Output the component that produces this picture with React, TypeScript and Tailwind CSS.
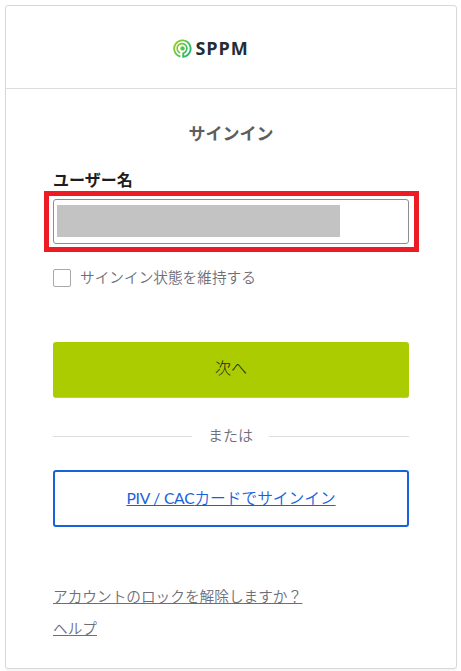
export default function App() {
  return (
    <div className="h-[671px] w-[461px] overflow-hidden bg-white pt-[5px] pl-[5px] font-['Lato','Noto_Sans_CJK_JP',sans-serif] text-[#6e6e78]">
      <main className="h-[664px] w-[452px] rounded-[3px] border border-[#d8d8d8] shadow-[0_2px_1px_rgba(0,0,0,0.04)]">
        <header className="flex h-[83px] items-center justify-center border-b border-[#dddddd]">
          <AppLogo />
        </header>
        <SignInForm />
      </main>
    </div>
  );
}

function AppLogo() {
  return (
    <div className="flex items-center gap-[3px] pt-px pr-[40px]">
      <svg width="19" height="19" viewBox="0 0 19 19" fill="none" className="mt-px">
        <defs>
          <linearGradient id="logo" x1="2" y1="5" x2="17" y2="14" gradientUnits="userSpaceOnUse">
            <stop stopColor="#96cc29" />
            <stop offset="1" stopColor="#1db874" />
          </linearGradient>
        </defs>
        <g stroke="url(#logo)">
          <path d="M7.4 17.5A8.2 8.2 0 1 1 10.2 17.7V13.8" strokeWidth="1.9" />
          <path d="M7.2 14A4.9 4.9 0 1 1 10.2 14.2" strokeWidth="1.7" />
        </g>
        <circle cx="9.5" cy="9.4" r="2.2" fill="url(#logo)" />
      </svg>
      <span className="font-['Open_Sans',sans-serif] text-[18px] leading-6 font-bold tracking-[0.9px] text-[#252c36]">
        SPPM
      </span>
    </div>
  );
}

function SignInForm() {
  return (
    <div className="flex flex-col px-[47px] pt-[33px]">
      <h1 className="text-center text-[17px] leading-6 font-bold text-[#5e5e5e]">サインイン</h1>

      <label className="mt-[22px] text-[16px] leading-6 font-bold text-[#1d1d21]">
        ユーザー名
      </label>
      <div className="relative mt-[7px] h-[45px] rounded-[3px] border border-[#8c8c96] pt-[5px] pl-[3px]">
        <div className="h-8 w-[283px] bg-[#c3c3c3]" />
        <div className="absolute -top-[9px] -left-[10px] h-[61px] w-[375px] border-[5px] border-[#ed1c24]" />
      </div>

      <div className="mt-[22px] flex h-6 items-center gap-[9px]">
        <span className="h-[18px] w-[18px] rounded-[2px] border border-[#a8a8a8]" />
        <span className="text-[14.67px] font-[350]">サインイン状態を維持する</span>
      </div>

      <button className="mt-[52px] h-14 rounded-[3px] border-b border-[#b9c77c] bg-[#aacc00] pb-1 text-[16px] font-light text-[#1d1d21]">
        次へ
      </button>

      <div className="mt-[26px] flex h-6 items-center">
        <span className="h-px w-[139px] bg-[#dddddd]" />
        <span className="flex-1 pb-0.5 text-center text-[15px] font-[350]">または</span>
        <span className="h-px w-[140px] bg-[#dddddd]" />
      </div>

      <button className="mt-[22px] h-[57px] rounded-[3px] border-2 border-[#1662dd] text-[15.7px] font-[350] text-[#1662dd] underline [text-decoration-skip-ink:none]">
        <span className="font-normal tracking-[-0.25px]">PIV / CAC</span>カードでサインイン
      </button>

      <nav className="mt-[58px] flex flex-col items-start gap-2 text-[14.67px] leading-6 font-[350] underline [text-decoration-skip-ink:none]">
        <a>アカウントのロックを解除しますか？</a>
        <a>ヘルプ</a>
      </nav>
    </div>
  );
}
